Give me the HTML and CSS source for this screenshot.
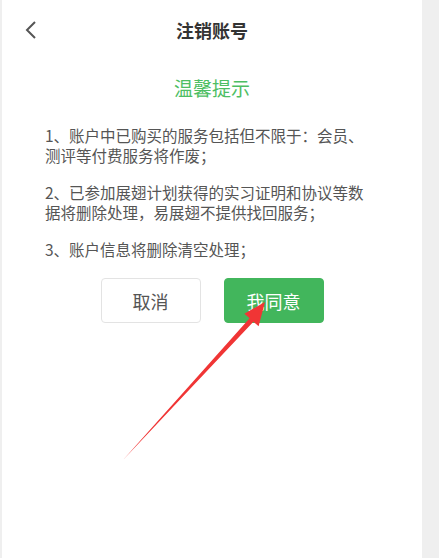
FILE: index.html
```html
<!DOCTYPE html>
<html lang="zh">
<head>
<meta charset="utf-8">
<link rel="stylesheet" href="styles.css">
</head>
<body>
<div class="page">
  <div class="navbar">
    <span class="back">
      <svg width="14" height="20" viewBox="0 0 14 20"><path d="M11 2 L3 10 L11 18" fill="none" stroke="#555" stroke-width="2"/></svg>
    </span>
    <span class="title">注销账号</span>
    <span class="spacer"></span>
  </div>
  <div class="tip-title">温馨提示</div>
  <div class="content">
    <p>1、账户中已购买的服务包括但不限于：会员、<br>测评等付费服务将作废；</p>
    <p>2、已参加展翅计划获得的实习证明和协议等数<br>据将删除处理，易展翅不提供找回服务；</p>
    <p>3、账户信息将删除清空处理；</p>
  </div>
  <div class="actions">
    <button class="btn btn-cancel">取消</button>
    <button class="btn btn-agree">我同意</button>
  </div>
  <svg class="arrow" width="420" height="558" viewBox="2 0 420 558">
    <polygon points="265,302 244.4,313.7 249.6,318.3 123,460 253.4,321.7 258.6,326.3" fill="#f03535"/>
  </svg>
</div>
</body>
</html>
```
FILE: styles.css
```css
html, body {
  margin: 0;
  padding: 0;
}
body {
  background: #efefef;
  font-family: "Noto Sans CJK SC", "Noto Sans", sans-serif;
}
.page {
  position: relative;
  width: 420px;
  height: 558px;
  margin-left: 2px;
  background: #fff;
  overflow: hidden;
}
.navbar {
  height: 60px;
  display: grid;
  grid-template-columns: 60px 1fr 60px;
  align-items: center;
}
.back {
  display: flex;
  justify-content: flex-end;
  padding-right: 0;
  margin-left: 0;
  width: 36px;
  padding-top: 0;
}
.back svg {
  display: block;
}
.title {
  text-align: center;
  font-size: 18px;
  font-weight: 700;
  color: #333;
  line-height: 24px;
}
.tip-title {
  margin-top: 16px;
  text-align: center;
  font-size: 19px;
  line-height: 24px;
  color: #4dbe63;
}
.content {
  margin-top: 25px;
  padding: 0 20px 0 43px;
}
.content p {
  margin: 0 0 17px 0;
  font-size: 15.5px;
  line-height: 20px;
  color: #555;
  white-space: nowrap;
}
.content p:last-child {
  margin-bottom: 0;
}
.actions {
  margin-top: 19px;
  display: flex;
  justify-content: center;
  gap: 23px;
}
.btn {
  width: 100px;
  height: 45px;
  border-radius: 4px;
  font-family: "Noto Sans CJK SC", "Noto Sans", sans-serif;
  font-size: 18px;
  padding: 0;
}
.btn-cancel {
  background: #fff;
  border: 1px solid #e3e3e3;
  color: #555;
}
.btn-agree {
  background: #42b65c;
  border: 1px solid #42b65c;
  color: #fff;
}
.arrow {
  position: absolute;
  left: 0;
  top: 0;
  pointer-events: none;
}
```
